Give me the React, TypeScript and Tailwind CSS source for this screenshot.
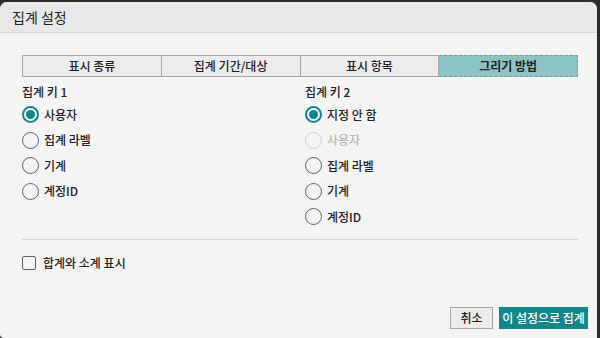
import React from 'react';

const tabs = ['표시 종류', '집계 기간/대상', '표시 항목', '그리기 방법'];

const Radio: React.FC<{ label: string; checked?: boolean; disabled?: boolean }> = ({ label, checked, disabled }) => {
  return (
    <div className="flex items-center h-[25.5px]">
      {checked ? (
        <span className="w-[17px] h-[17px] rounded-full border-2 border-[#12878b] flex items-center justify-center">
          <span className="w-[9px] h-[9px] rounded-full bg-[#12878b]" />
        </span>
      ) : (
        <span className={`w-[17px] h-[17px] rounded-full border-[1.5px] ${disabled ? 'border-[#cfcfcf]' : 'border-[#5f5f5f]'}`} />
      )}
      <span className={`ml-[5px] text-[12px] font-medium ${disabled ? 'text-[#b8b8b8]' : 'text-[#222]'}`}>{label}</span>
    </div>
  );
};

export default function App() {
  return (
    <div className="w-[600px] h-[338px] bg-[#2b2b2b] pt-[2px] overflow-hidden" style={{ fontFamily: '"Noto Sans CJK KR", "Noto Sans", sans-serif' }}>
      <div className="w-[597px] h-[336px] bg-[#f4f4f4] rounded-t-[7px] rounded-bl-[4px] flex flex-col overflow-hidden">
        <div className="h-[31px] bg-[#e8e8e8] border-b border-[#d6d6d6] flex items-center px-[12px] text-[14px] text-[#222] shrink-0">
          집계 설정
        </div>
        <div className="flex-1 flex flex-col px-[22px] pt-[22px]">
          <div className="flex h-[22px] w-[556px]">
            {tabs.map((t, i) => (
              <div
                key={t}
                className={`flex-1 flex items-center justify-center text-[12px] text-[#222] border ${
                  i === 3
                    ? 'bg-[#8cc4c5] border-dashed border-[#7a9c9d] font-bold'
                    : 'bg-[#ececec] border-[#a6a6a6] font-medium'
                } ${i > 0 ? 'border-l-0' : ''}`}
              >
                {t}
              </div>
            ))}
          </div>
          <div className="flex mt-[5px] w-[556px]">
            <div className="w-[283px]">
              <div className="text-[12px] font-medium text-[#222] h-[20px] flex items-center">집계 키 1</div>
              <Radio label="사용자" checked />
              <Radio label="집계 라벨" />
              <Radio label="기계" />
              <Radio label="계정ID" />
            </div>
            <div className="flex-1">
              <div className="text-[12px] font-medium text-[#222] h-[20px] flex items-center">집계 키 2</div>
              <Radio label="지정 안 함" checked />
              <Radio label="사용자" disabled />
              <Radio label="집계 라벨" />
              <Radio label="기계" />
              <Radio label="계정ID" />
            </div>
          </div>
          <div className="w-[556px] h-px bg-[#d8d8d8] mt-[9px]" />
          <div className="flex items-center mt-[14px]">
            <span className="w-[14px] h-[14px] border-[1.5px] border-[#5f5f5f] rounded-[2px]" />
            <span className="ml-[7px] text-[12px] font-medium text-[#222]">합계와 소계 표시</span>
          </div>
          <div className="flex-1" />
          <div className="flex justify-end gap-[6px] pb-[9px] w-[566px]">
            <button className="h-[22px] w-[43px] bg-[#ececec] border border-[#a6a6a6] text-[12px] font-medium text-[#222]">취소</button>
            <button className="h-[22px] w-[89px] bg-[#12878b] text-[12px] font-medium text-white">이 설정으로 집계</button>
          </div>
        </div>
      </div>
    </div>
  );
}
